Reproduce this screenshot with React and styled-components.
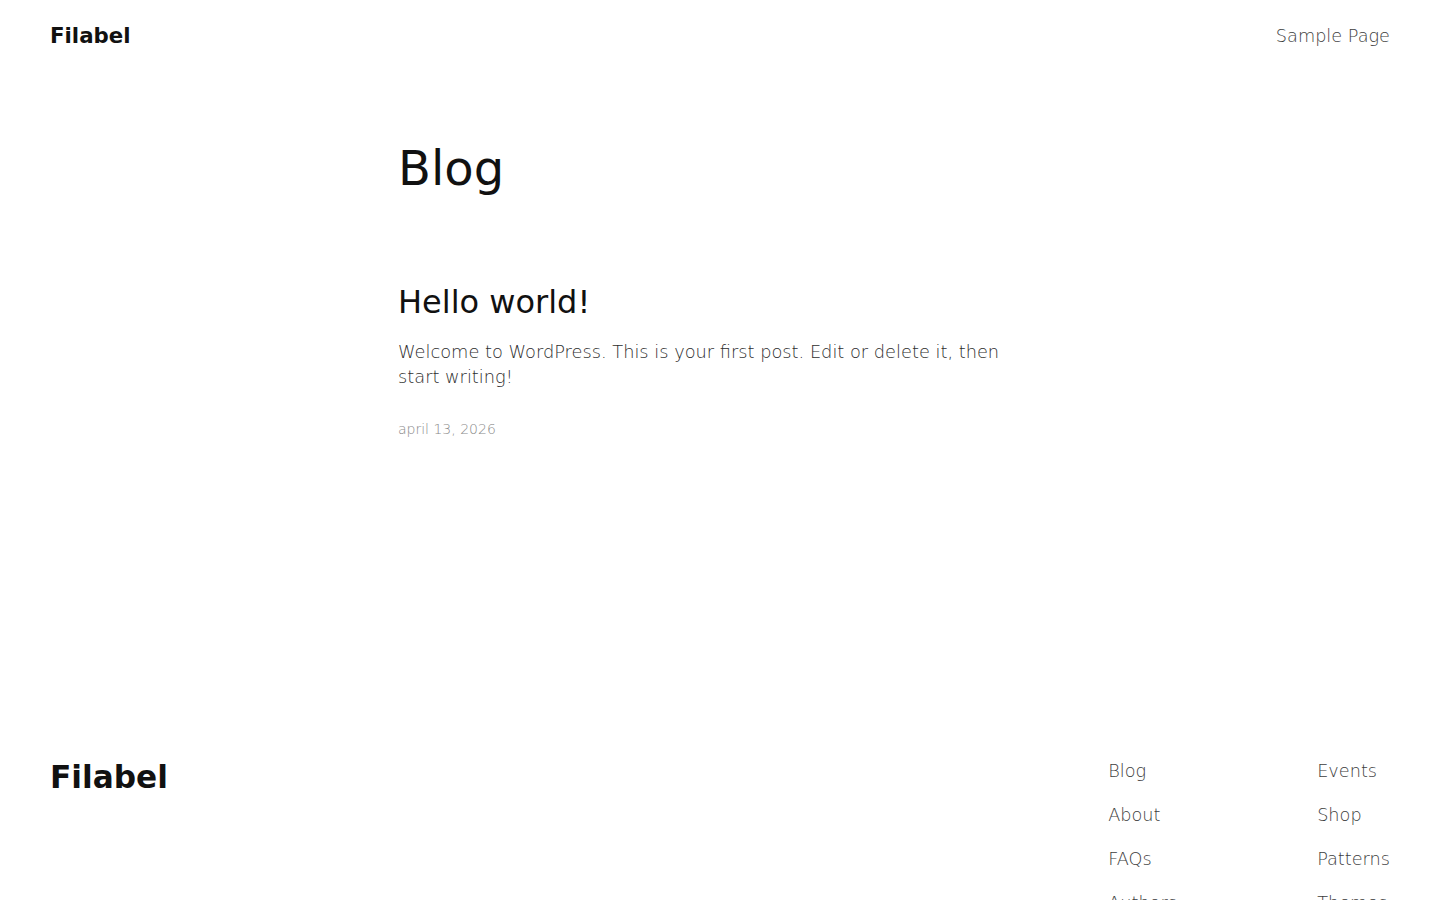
import React from 'react'
import styled, { createGlobalStyle } from 'styled-components'

const GlobalStyle = createGlobalStyle`
	html, body {
		margin: 0;
		padding: 0;
		background: #fff;
	}
	body {
		font-family: 'DejaVu Sans', 'Liberation Sans', sans-serif;
		color: #111;
		-webkit-font-smoothing: antialiased;
	}
	a {
		color: inherit;
		text-decoration: none;
	}
`

const Page = styled.div`
	min-height: 100vh;
	display: flex;
	flex-direction: column;
`

const Header = styled.header`
	display: flex;
	justify-content: space-between;
	align-items: center;
	padding: 21px 50px 19px;
	height: 30px;
`

const SiteTitle = styled.a`
	font-size: ${p => (p.large ? '31.2px' : '21.3px')};
	margin-top: ${p => (p.large ? '2px' : '0')};
	font-weight: 700;
	color: #111;
	line-height: 1;
`

const NavLink = styled.a`
	font-size: 17.7px;
	font-weight: 300;
	color: #3d3d3d;
`

const Main = styled.main`
	width: 644px;
	margin: 0 auto;
	padding-top: 67px;
	flex: 1;
	min-height: 623px;
`

const PageTitle = styled.h1`
	margin: 0 0 83px;
	font-size: 48px;
	font-weight: 400;
	line-height: 1.3;
`

const Post = styled.article`
	display: flex;
	flex-direction: column;
`

const PostTitle = styled.h2`
	margin: 0 0 15px;
	font-size: 32px;
	font-weight: 400;
	line-height: 1.3;
`

const Excerpt = styled.p`
	margin: 0 0 32px;
	font-size: 17.8px;
	font-weight: 300;
	line-height: 25px;
	color: #2e2e2e;
`

const PostDate = styled.time`
	font-size: 14px;
	font-weight: 300;
	line-height: 16px;
	color: #8a8a8a;
`

const Footer = styled.footer`
	display: flex;
	justify-content: space-between;
	align-items: flex-start;
	padding: 0 50px 40px;
`

const FooterNav = styled.nav`
	display: grid;
	grid-template-columns: 209px auto;
	row-gap: 22px;
`

const FooterLink = styled(NavLink)`
	line-height: 22px;
`

const links = ['Blog', 'Events', 'About', 'Shop', 'FAQs', 'Patterns', 'Authors', 'Themes']

const App = () => (
	<Page>
		<GlobalStyle />
		<Header>
			<SiteTitle href="#">Filabel</SiteTitle>
			<NavLink href="#">Sample Page</NavLink>
		</Header>
		<Main>
			<PageTitle>Blog</PageTitle>
			<Post>
				<PostTitle>Hello world!</PostTitle>
				<Excerpt>
					Welcome to WordPress. This is your first post. Edit or delete it, then start writing!
				</Excerpt>
				<PostDate>april 13, 2026</PostDate>
			</Post>
		</Main>
		<Footer>
			<SiteTitle href="#" large>Filabel</SiteTitle>
			<FooterNav>
				{links.map(l => (
					<FooterLink key={l} href="#">{l}</FooterLink>
				))}
			</FooterNav>
		</Footer>
	</Page>
)

export default App
